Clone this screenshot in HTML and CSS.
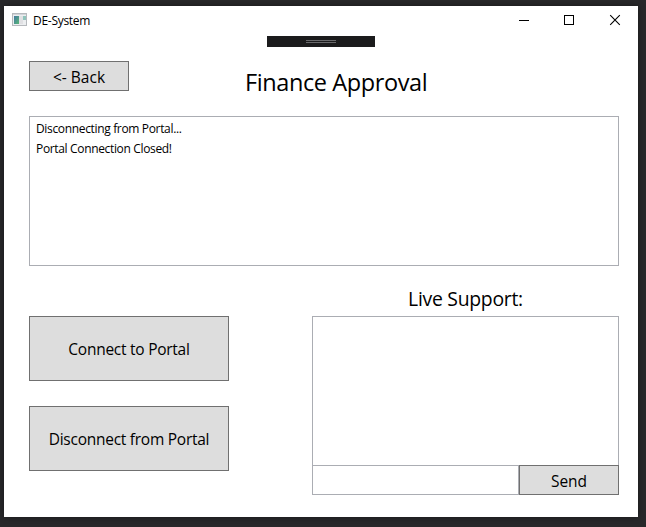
FILE: index.html
```html
<!DOCTYPE html>
<html lang="en">
<head>
<meta charset="utf-8">
<title>DE-System</title>
<link rel="stylesheet" href="styles.css">
</head>
<body>
<main class="window">
  <header class="titlebar">
    <svg class="app-icon" width="16" height="14" viewBox="0 0 16 14">
      <defs><linearGradient id="pane" x1="0" y1="0" x2="1" y2="1"><stop offset="0" stop-color="#4478a0"/><stop offset="1" stop-color="#59b878"/></linearGradient></defs>
      <rect x=".5" y=".5" width="14" height="12" fill="#eceef0" stroke="#b5b8bc"/>
      <path d="M1 1.5h13" stroke="#d2d5d9"/>
      <rect x="2" y="3" width="5" height="8" fill="url(#pane)"/>
      <rect x="7" y="3" width="4" height="8" fill="#e0e0e3"/>
      <rect x="11" y="3" width="3" height="4" fill="#8fc4bb"/>
    </svg>
    <span class="caption">DE-System</span>
    <div class="controls">
      <svg width="46" height="28" viewBox="0 0 46 28"><path d="M19 14.500h10" stroke="#000"/></svg>
      <svg width="46" height="28" viewBox="0 0 46 28"><rect x="18.500" y="9.500" width="9" height="9" fill="none" stroke="#000"/></svg>
      <svg width="46" height="28" viewBox="0 0 46 28"><path d="M18.200 9.200l9.600 9.600M27.800 9.200l-9.600 9.600" stroke="#000" stroke-width="1.100"/></svg>
    </div>
  </header>
  <div class="debug-bar"><span class="grip"></span></div>
  <div class="heading">
    <button class="btn back"><span>&lt;- Back</span></button>
    <h1><span>Finance Approval</span></h1>
  </div>
  <ul class="log">
    <li><span class="log-a">Disconnecting from Portal...</span></li>
    <li><span class="log-b">Portal Connection Closed!</span></li>
  </ul>
  <div class="lower">
    <div class="actions">
      <button class="btn connect"><span>Connect to Portal</span></button>
      <button class="btn disconnect"><span>Disconnect from Portal</span></button>
    </div>
    <section class="support">
      <h2><span>Live Support:</span></h2>
      <div class="messages"></div>
      <div class="compose">
        <div class="field"></div>
        <button class="btn send"><span>Send</span></button>
      </div>
    </section>
  </div>
</main>
</body>
</html>
```
FILE: styles.css
```css
* { box-sizing: border-box; }
body {
  margin: 0;
  height: 527px;
  padding: 6px 8px 10px 4px;
  background: #28282a;
  color: #000;
  font-family: "Open Sans", "Noto Sans", sans-serif;
  overflow: hidden;
}
.window {
  position: relative;
  width: 634px;
  height: 511px;
  background: #fff;
  box-shadow: 0 0 6px rgba(0, 0, 0, .4);
}
.titlebar { display: flex; height: 28px; align-items: center; padding-left: 8px; }
.caption { margin-left: 5px; padding-top: 1px; font-size: 12px; letter-spacing: -.28px; }
.controls { display: flex; margin-left: auto; }
.debug-bar {
  position: absolute;
  left: 263px;
  top: 30px;
  width: 108px;
  height: 11px;
  background: #1b1b1c;
  display: flex;
  justify-content: center;
  padding-top: 4px;
}
.grip { width: 30px; height: 3px; border: solid #68686a; border-width: 1px 0; }
.heading { display: flex; height: 82px; padding: 27px 25px 0; }
.btn {
  display: flex;
  align-items: center;
  justify-content: center;
  padding: 0;
  border: 1px solid #707070;
  border-radius: 0;
  background: #ddd;
  color: #000;
  font: 15.500px "Open Sans", "Noto Sans", sans-serif;
  white-space: nowrap;
}
.btn span { padding-top: 2px; }
.back { width: 100px; height: 30px; }
h1, h2 { margin: 0; font-weight: 400; white-space: nowrap; }
h1 { margin-left: 116px; font-size: 23.500px; line-height: 34px; padding-top: 4px; letter-spacing: -.4px; }
.log {
  height: 150px;
  margin: 0 19px 0 25px;
  padding: 2px 6px;
  border: 1px solid #abadb3;
  list-style: none;
  font-size: 12px;
  line-height: 20px;
  letter-spacing: -.34px;
}
.lower { display: flex; justify-content: space-between; padding: 20px 19px 0 25px; }
.actions { display: flex; flex-direction: column; gap: 25px; padding-top: 30px; }
.connect, .disconnect { width: 200px; height: 65px; letter-spacing: -.26px; }
.connect span, .disconnect span { padding-top: 0; }
.support { width: 307px; }
h2 { height: 30px; font-size: 19.400px; line-height: 25px; text-align: center; letter-spacing: -.28px; }
.messages { height: 149px; border: 1px solid #abadb3; border-bottom: 0; }
.compose { display: flex; height: 30px; }
.field { flex: 1; border: 1px solid #abadb3; }
.send { width: 100px; }
```
